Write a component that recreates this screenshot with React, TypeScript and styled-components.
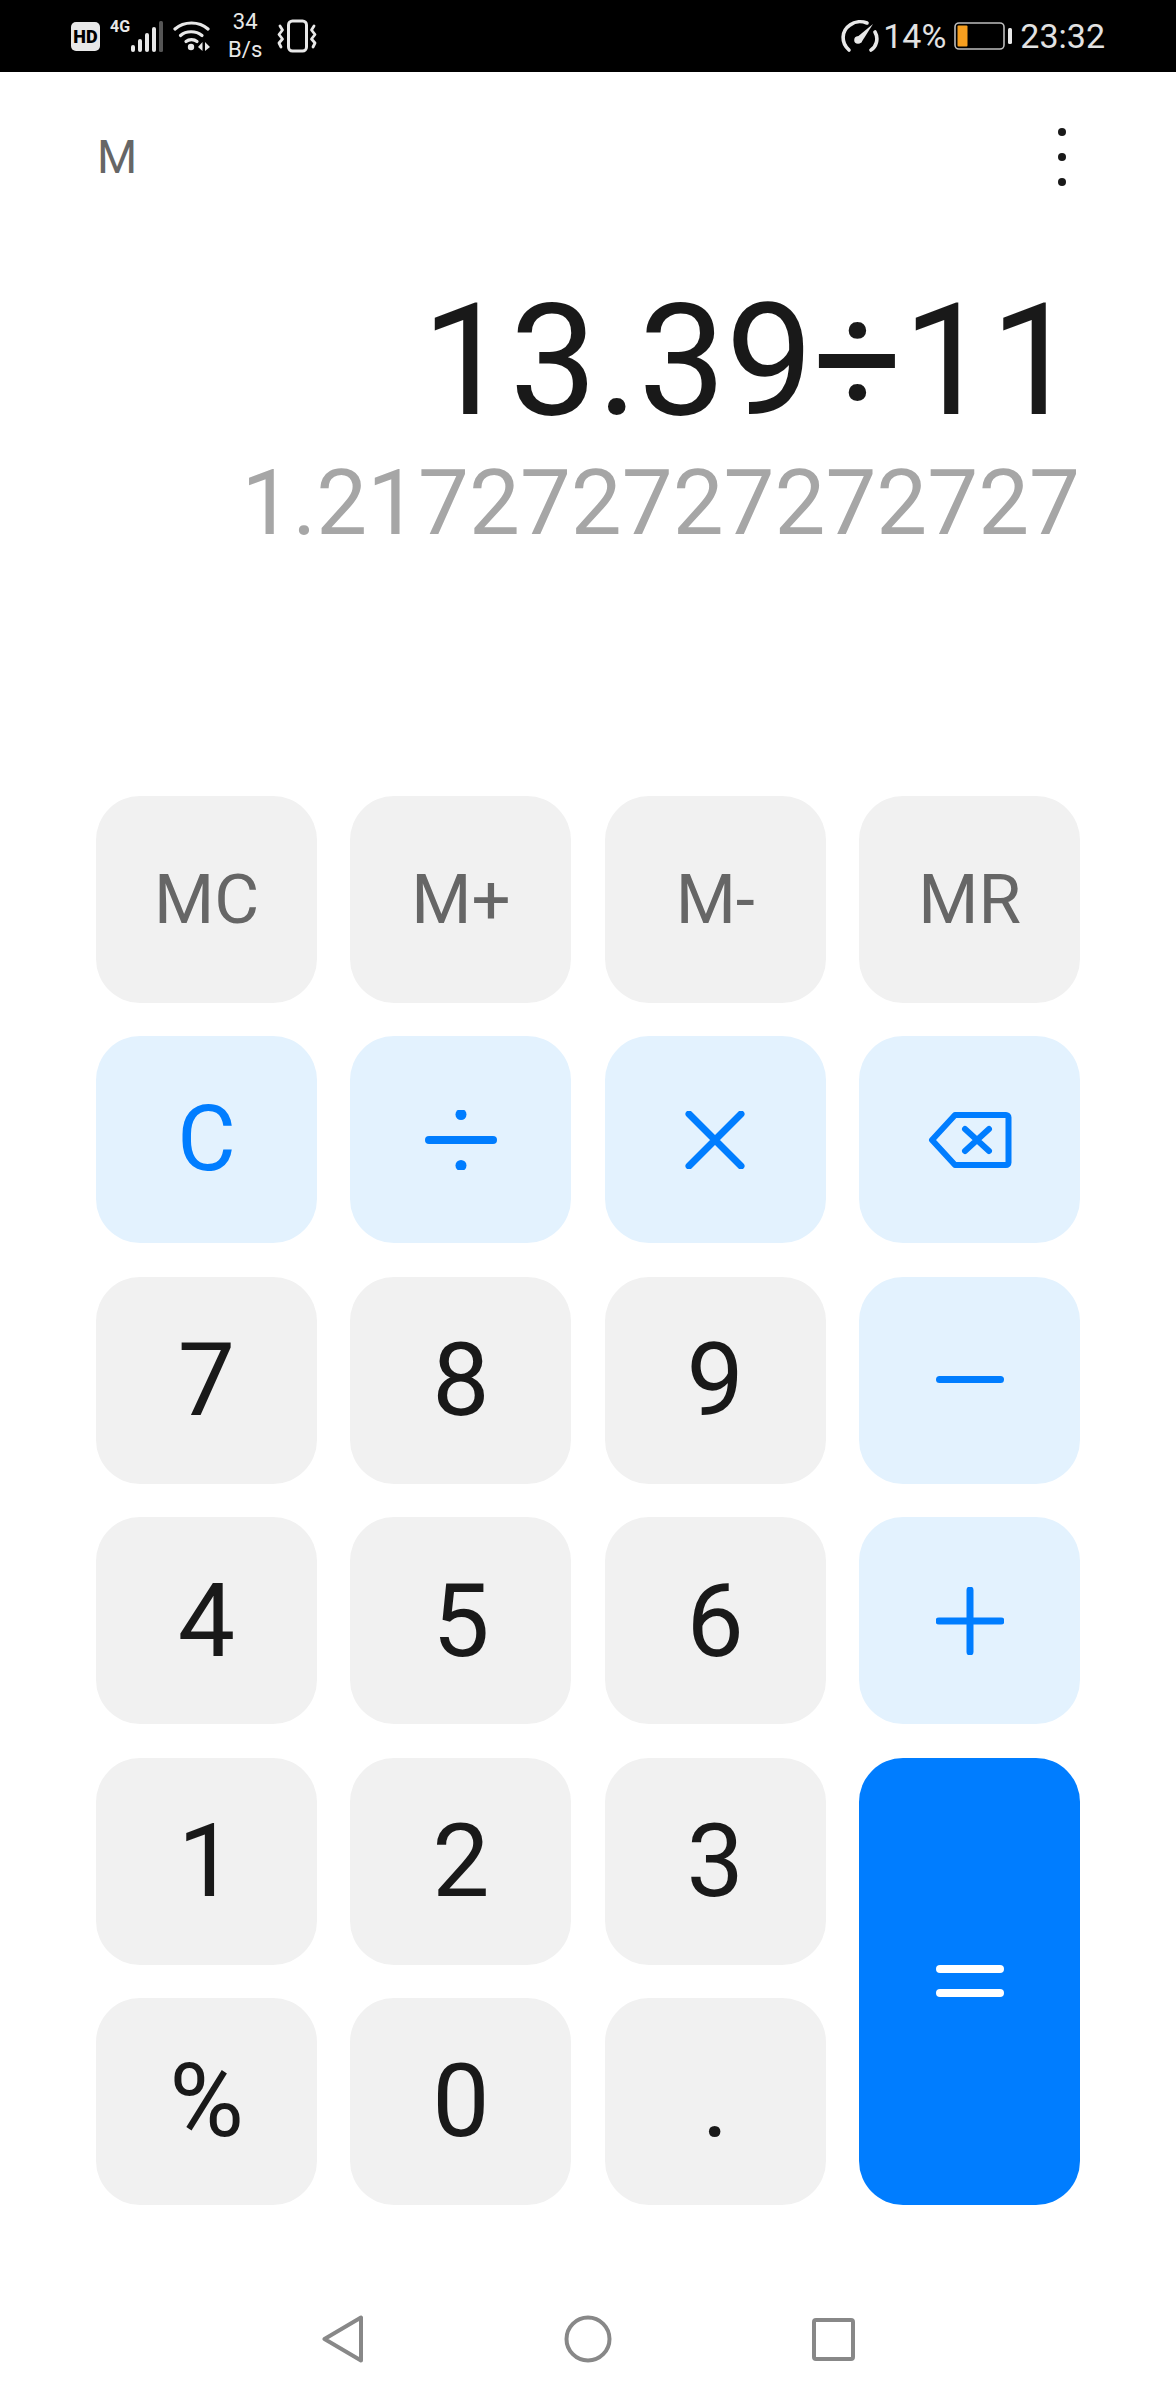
import React from "react";
import styled, { createGlobalStyle } from "styled-components";

const BLUE = "#007dff";

type TKeyVariant = "memory" | "digit" | "operator" | "equals";

interface IKey {
  id: string;
  label?: string;
  icon?: React.ReactNode;
  variant: TKeyVariant;
  tall?: boolean;
}

const GlobalStyle = createGlobalStyle`
  html, body {
    margin: 0;
    padding: 0;
    background: #fff;
  }
  body {
    font-family: Roboto, "Liberation Sans", sans-serif;
  }
`;

const DivideIcon = () => (
  <svg width="72" height="60" viewBox="0 0 72 60">
    <rect x="0" y="26" width="72" height="8" rx="4" fill={BLUE} />
    <circle cx="36" cy="4.5" r="5.5" fill={BLUE} />
    <circle cx="36" cy="55.5" r="5.5" fill={BLUE} />
  </svg>
);

const TimesIcon = () => (
  <svg width="60" height="58" viewBox="0 0 60 58">
    <path d="M4 3 L56 55 M56 3 L4 55" stroke={BLUE} strokeWidth="7" strokeLinecap="round" fill="none" />
  </svg>
);

const BackspaceIcon = () => (
  <svg width="84" height="56" viewBox="0 0 84 56">
    <path
      d="M27 3 H78 A2.5 2.5 0 0 1 80.5 5.5 V50.5 A2.5 2.5 0 0 1 78 53 H27 L4 28 Z"
      stroke={BLUE}
      strokeWidth="6"
      strokeLinejoin="round"
      fill="none"
    />
    <path d="M37 17 L61 39 M61 17 L37 39" stroke={BLUE} strokeWidth="6" strokeLinecap="round" fill="none" />
  </svg>
);

const MinusIcon = () => (
  <svg width="68" height="8" viewBox="0 0 68 8">
    <rect width="68" height="7" rx="3.5" fill={BLUE} />
  </svg>
);

const PlusIcon = () => (
  <svg width="68" height="68" viewBox="0 0 68 68">
    <path d="M3 34 H65 M34 3 V65" stroke={BLUE} strokeWidth="7" strokeLinecap="round" fill="none" />
  </svg>
);

const EqualsIcon = () => (
  <svg width="68" height="32" viewBox="0 0 68 32">
    <rect y="0" width="68" height="8" rx="4" fill="#fff" />
    <rect y="24" width="68" height="8" rx="4" fill="#fff" />
  </svg>
);

const keys: IKey[] = [
  { id: "mc", label: "MC", variant: "memory" },
  { id: "m+", label: "M+", variant: "memory" },
  { id: "m-", label: "M-", variant: "memory" },
  { id: "mr", label: "MR", variant: "memory" },
  { id: "c", label: "C", variant: "operator" },
  { id: "div", icon: <DivideIcon />, variant: "operator" },
  { id: "mul", icon: <TimesIcon />, variant: "operator" },
  { id: "back", icon: <BackspaceIcon />, variant: "operator" },
  { id: "7", label: "7", variant: "digit" },
  { id: "8", label: "8", variant: "digit" },
  { id: "9", label: "9", variant: "digit" },
  { id: "minus", icon: <MinusIcon />, variant: "operator" },
  { id: "4", label: "4", variant: "digit" },
  { id: "5", label: "5", variant: "digit" },
  { id: "6", label: "6", variant: "digit" },
  { id: "plus", icon: <PlusIcon />, variant: "operator" },
  { id: "1", label: "1", variant: "digit" },
  { id: "2", label: "2", variant: "digit" },
  { id: "3", label: "3", variant: "digit" },
  { id: "eq", icon: <EqualsIcon />, variant: "equals", tall: true },
  { id: "pct", label: "%", variant: "digit" },
  { id: "0", label: "0", variant: "digit" },
  { id: "dot", label: ".", variant: "digit" },
];

const SignalIcon = () => (
  <svg width="33" height="32" viewBox="0 0 33 32">
    <rect x="1" y="25" width="4" height="7" rx="2" fill="#e8e8e8" />
    <rect x="8" y="19" width="4" height="13" rx="2" fill="#e8e8e8" />
    <rect x="15" y="13" width="4" height="19" rx="2" fill="#e8e8e8" />
    <rect x="22" y="7" width="4" height="25" rx="2" fill="#e8e8e8" />
    <rect x="29" y="1" width="4" height="31" rx="1.5" fill="#555" />
  </svg>
);

const WifiIcon = () => (
  <svg width="37" height="30" viewBox="0 0 37 30">
    <g stroke="#e8e8e8" strokeWidth="3.2" strokeLinecap="round" fill="none">
      <path d="M2 8 C11 0 26 0 35 8" />
      <path d="M7.5 14.5 C13 9.5 23 9.5 29 14.5" />
      <path d="M13 20.5 C16 18 21 18 24 20.5" />
    </g>
    <circle cx="18" cy="26" r="3.2" fill="#e8e8e8" />
    <path d="M29.5 21 V30 L25 26 Z M32 21 V30 L37 26 Z" fill="#e8e8e8" />
  </svg>
);

const VibrateIcon = () => (
  <svg width="40" height="34" viewBox="0 0 40 34">
    <rect x="11.5" y="2" width="18" height="30" rx="4" stroke="#e8e8e8" strokeWidth="3" fill="none" />
    <g stroke="#e8e8e8" strokeWidth="2.8" fill="none" strokeLinecap="round" strokeLinejoin="round">
      <path d="M3 7 L5.5 11 L2 15.5 L5.5 20 L2 24 L4 28" />
      <path d="M37 7 L34.5 11 L38 15.5 L34.5 20 L38 24 L36 28" />
    </g>
  </svg>
);

const GaugeIcon = () => (
  <svg width="38" height="34" viewBox="0 0 38 34">
    <g stroke="#e8e8e8" strokeWidth="3.6" strokeLinecap="round" fill="none">
      <path d="M8 31 C0 24 0 12 9 6 C14 2 21 2 26 4" />
      <path d="M34 13 C38 20 35 28 30 31" />
    </g>
    <path d="M15 19 L32 5 L20 24 Z" fill="#e8e8e8" />
    <circle cx="17" cy="21" r="3.8" fill="#e8e8e8" />
  </svg>
);

const BatteryIcon = () => (
  <svg width="58" height="28" viewBox="0 0 58 28">
    <rect x="1" y="1" width="49" height="26" rx="4" stroke="#bdbdbd" strokeWidth="1.6" fill="none" />
    <rect x="3.5" y="3.5" width="10" height="21" rx="1" fill="#f79f1f" />
    <rect x="54" y="6" width="4" height="16" rx="1.5" fill="#e8e8e8" />
  </svg>
);

const BackIcon = () => (
  <svg width="42" height="48" viewBox="0 0 42 48">
    <path d="M2.5 24 L39 2.5 V45.5 Z" stroke="#888" strokeWidth="4" strokeLinejoin="round" fill="none" />
  </svg>
);

const HomeIcon = () => (
  <svg width="48" height="48" viewBox="0 0 48 48">
    <circle cx="24" cy="24" r="21.5" stroke="#888" strokeWidth="4" fill="none" />
  </svg>
);

const RecentIcon = () => (
  <svg width="43" height="43" viewBox="0 0 43 43">
    <rect x="2" y="2" width="39" height="39" rx="2" stroke="#888" strokeWidth="4" fill="none" />
  </svg>
);

export default function App() {
  return (
    <Screen>
      <GlobalStyle />
      <StatusBar>
        <StatusGroup>
          <HdBadge>HD</HdBadge>
          <NetworkGroup>
            <NetworkLabel>4G</NetworkLabel>
            <SignalIcon />
          </NetworkGroup>
          <WifiIcon />
          <Speed>
            <span>34</span>
            <span>B/s</span>
          </Speed>
          <VibrateIcon />
        </StatusGroup>
        <StatusGroup $right>
          <GaugeIcon />
          <BatteryPercent>14%</BatteryPercent>
          <BatteryIcon />
          <StatusText>23:32</StatusText>
        </StatusGroup>
      </StatusBar>

      <Header>
        <MemoryFlag>M</MemoryFlag>
        <MenuButton>
          <MenuDot />
          <MenuDot />
          <MenuDot />
        </MenuButton>
      </Header>

      <Display>
        <Expression>13.39÷11</Expression>
        <Result>1.217272727272727</Result>
      </Display>

      <Keypad>
        {keys.map((key) => (
          <Key key={key.id} $variant={key.variant} $tall={key.tall}>
            {key.icon || key.label}
          </Key>
        ))}
      </Keypad>

      <NavBar>
        <BackIcon />
        <HomeIcon />
        <RecentIcon />
      </NavBar>
    </Screen>
  );
}

const Screen = styled.div`
  width: 1176px;
  height: 2400px;
  display: flex;
  flex-direction: column;
  background: #fff;
  overflow: hidden;
`;

const StatusBar = styled.div`
  height: 72px;
  flex: none;
  box-sizing: border-box;
  background: #000;
  color: #e8e8e8;
  display: flex;
  align-items: center;
  justify-content: space-between;
  padding: 0 71px;
`;

const StatusGroup = styled.div<{ $right?: boolean }>`
  display: flex;
  align-items: center;
  gap: ${(props) => (props.$right ? "8px" : "10px")};
`;

const HdBadge = styled.div`
  width: 29px;
  height: 29px;
  border-radius: 5px;
  background: #e8e8e8;
  color: #000;
  font-size: 18px;
  font-weight: 900;
  display: flex;
  align-items: center;
  justify-content: center;
`;

const NetworkGroup = styled.div`
  display: flex;
  align-items: flex-end;
  height: 32px;
`;

const NetworkLabel = styled.span`
  font-size: 16px;
  font-weight: 700;
  line-height: 14px;
  align-self: flex-start;
  font-family: "Liberation Sans Narrow", Roboto, sans-serif;
`;

const Speed = styled.div`
  display: flex;
  flex-direction: column;
  align-items: center;
  font-size: 22px;
  line-height: 28px;
  margin: 0 5px 0 8px;
`;

const StatusText = styled.span`
  font-size: 34px;
  line-height: 40px;
  font-weight: 400;
  color: #e2e2e2;
`;

const BatteryPercent = styled(StatusText)`
  margin-left: -4px;
`;

const Header = styled.div`
  height: 170px;
  flex: none;
  display: flex;
  align-items: center;
  justify-content: space-between;
  padding: 0 110px 0 97px;
`;

const MemoryFlag = styled.span`
  font-size: 46px;
  line-height: 60px;
  color: #666;
`;

const MenuButton = styled.div`
  display: flex;
  flex-direction: column;
  gap: 17px;
`;

const MenuDot = styled.span`
  width: 8px;
  height: 8px;
  border-radius: 50%;
  background: #191919;
`;

const Display = styled.div`
  height: 554px;
  flex: none;
  box-sizing: border-box;
  display: flex;
  flex-direction: column;
  align-items: flex-end;
  padding: 29px 96px 0 0;
`;

const Expression = styled.div`
  font-size: 156px;
  line-height: 179px;
  color: #191919;
  margin-right: 2px;
`;

const Result = styled.div`
  font-size: 90.6px;
  line-height: 106px;
  color: #a6a6a6;
`;

const Keypad = styled.div`
  flex: none;
  display: grid;
  grid-template-columns: repeat(4, 221px);
  grid-auto-rows: 207px;
  column-gap: 33.4px;
  row-gap: 33.4px;
  padding: 0 96px;
`;

const Key = styled.div<{ $variant: TKeyVariant; $tall?: boolean }>`
  border-radius: 44px;
  display: flex;
  align-items: center;
  justify-content: center;
  grid-row: ${(props) => (props.$tall ? "span 2" : "auto")};
  font-size: ${(props) => (props.$variant === "memory" ? "69px" : props.$variant === "operator" ? "90px" : "102px")};
  color: ${(props) => (props.$variant === "memory" ? "#666" : props.$variant === "operator" ? BLUE : "#191919")};
  background: ${(props) =>
    props.$variant === "equals" ? BLUE : props.$variant === "operator" ? "#e3f2fe" : "#f1f1f1"};
`;

const NavBar = styled.div`
  flex: 1;
  box-sizing: border-box;
  display: flex;
  align-items: center;
  gap: 200px;
  padding: 74px 0 0 322px;
`;
